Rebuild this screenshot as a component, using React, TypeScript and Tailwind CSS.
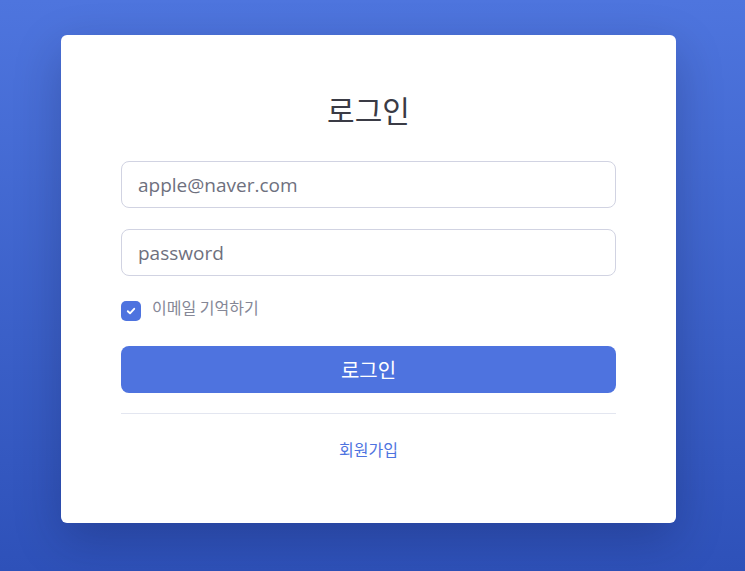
import { useState } from "react";

const LoginPage = () => {
  const [email, setEmail] = useState("");
  const [password, setPassword] = useState("");
  const [remember, setRemember] = useState(true);

  return (
    <div
      className="min-h-[571px] w-full bg-gradient-to-b from-[#4e75de] to-[#2e51b9] pt-[35px] px-[61px]"
      style={{ fontFamily: '"Open Sans", "Noto Sans CJK KR", sans-serif' }}
    >
      <div className="w-[615px] h-[488px] bg-white rounded-[6px] shadow-[0_1rem_3rem_rgba(0,0,30,0.22)] px-[60px] pt-[56px]">
        <h1
          className="text-center text-[30px] leading-[36px] text-[#3a3b45] mb-[34px]"
          style={{ fontFamily: '"Noto Sans CJK KR", sans-serif' }}
        >
          로그인
        </h1>

        <form className="flex flex-col" onSubmit={(e) => e.preventDefault()}>
          <input
            type="email"
            value={email}
            onChange={(e) => setEmail(e.target.value)}
            placeholder="apple@naver.com"
            className="h-[47px] w-full rounded-[8px] border border-[#d1d3e2] px-[16px] text-[19px] text-[#6e707e] placeholder:text-[#6e707e] outline-none"
          />
          <input
            type="password"
            value={password}
            onChange={(e) => setPassword(e.target.value)}
            placeholder="password"
            className="mt-[21px] h-[47px] w-full rounded-[8px] border border-[#d1d3e2] px-[16px] text-[19px] text-[#6e707e] placeholder:text-[#6e707e] outline-none"
          />

          <label className="mt-[25px] flex items-start gap-[11px] cursor-pointer select-none">
            <span
              onClick={() => setRemember(!remember)}
              className={`flex h-[20px] w-[20px] items-center justify-center rounded-[5px] ${
                remember ? "bg-[#4e73df]" : "border border-[#d1d3e2] bg-white"
              }`}
            >
              {remember && (
                <svg width="10" height="10" viewBox="0 0 10 10">
                  <path
                    d="M1.8 5.2 L4 7.3 L8.2 2.8"
                    fill="none"
                    stroke="white"
                    strokeWidth="1.9"
                    strokeLinecap="round"
                    strokeLinejoin="round"
                  />
                </svg>
              )}
            </span>
            <span
              className="-mt-[2px] text-[16px] leading-[16px] text-[#858796]"
              style={{ fontFamily: '"Noto Sans CJK KR", sans-serif' }}
            >
              이메일 기억하기
            </span>
          </label>

          <button
            type="submit"
            className="mt-[25px] h-[47px] w-full rounded-[8px] bg-[#4e73df] text-[20px] text-white"
            style={{ fontFamily: '"Noto Sans CJK KR", sans-serif' }}
          >
            로그인
          </button>
        </form>

        <hr className="mt-[20px] border-t border-[#e3e6f0]" />

        <div className="mt-[23px] text-center">
          <a
            href="#"
            className="text-[16px] text-[#4e73df]"
            style={{ fontFamily: '"Noto Sans CJK KR", sans-serif' }}
          >
            회원가입
          </a>
        </div>
      </div>
    </div>
  );
};

export default function App() {
  return <LoginPage />;
}
